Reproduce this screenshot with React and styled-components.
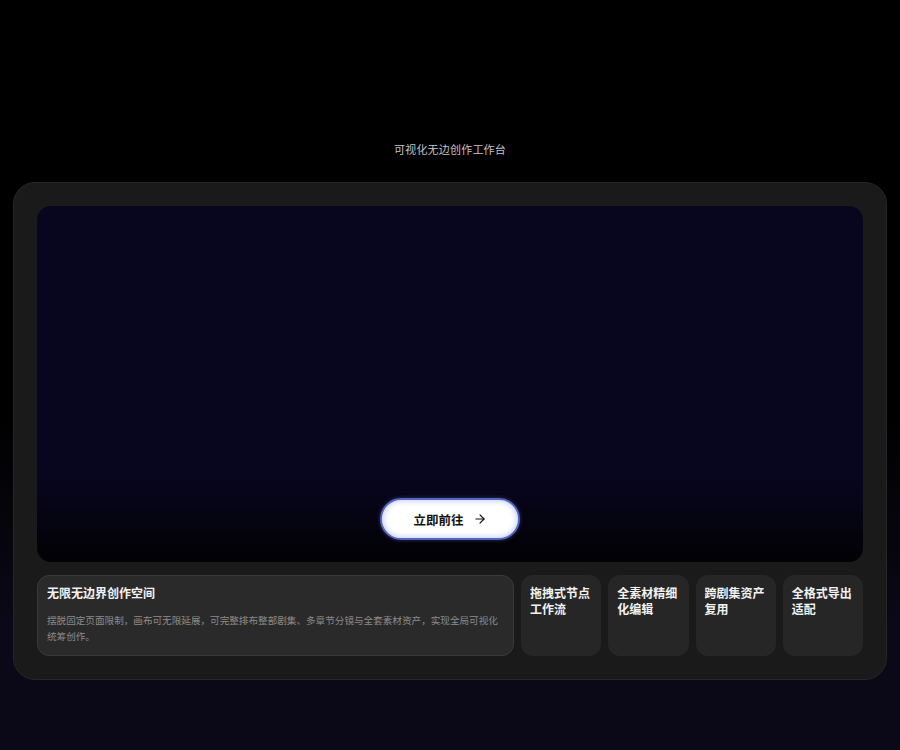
import React from 'react';
import styled, { createGlobalStyle } from 'styled-components';

const GlobalStyle = createGlobalStyle`
  html, body {
    margin: 0;
    padding: 0;
    background: #000;
  }
  body {
    font-family: "Noto Sans CJK SC", "Noto Sans", sans-serif;
  }
`;

const Page = styled.main`
  min-height: 750px;
  box-sizing: border-box;
  padding: 139px 13px 70px;
  background: linear-gradient(to bottom, #000 0%, #000 55%, #0b0918 85%, #0b0918 100%);
  display: flex;
  flex-direction: column;
  align-items: center;
`;

const Subtitle = styled.p`
  margin: 0 0 23px;
  font-size: 11px;
  line-height: 20px;
  color: #c4c4c4;
  letter-spacing: 0.2px;
`;

const Panel = styled.section`
  width: 100%;
  box-sizing: border-box;
  padding: 23px;
  background: #1a1a1a;
  border: 1px solid #262626;
  border-radius: 22px;
  display: flex;
  flex-direction: column;
  gap: 13px;
`;

const Canvas = styled.div`
  height: 356px;
  border-radius: 14px;
  background: linear-gradient(to bottom, #08061f 0%, #08061f 75%, #020104 100%);
  display: flex;
  align-items: flex-end;
  justify-content: center;
  padding-bottom: 22px;
  box-sizing: border-box;
`;

const GoButton = styled.button`
  width: 140px;
  height: 42px;
  border-radius: 21px;
  border: 2px solid #5566c2;
  background: #fff;
  box-shadow: inset 0 0 6px rgba(110, 130, 230, 0.55), 0 0 4px rgba(120, 140, 240, 0.35);
  display: flex;
  align-items: center;
  justify-content: center;
  gap: 9px;
  font-family: inherit;
  font-size: 12.5px;
  font-weight: 700;
  color: #111;
  cursor: pointer;
`;

const Features = styled.div`
  display: grid;
  grid-template-columns: 477px repeat(4, 1fr);
  gap: 7px;
  height: 81px;
`;

const Card = styled.div`
  box-sizing: border-box;
  border-radius: 12px;
  padding: ${(p) => (p.$wide ? '9px 9px' : '10px 9px')};
  background: ${(p) => (p.$wide ? '#2a2a2a' : '#262626')};
  border: ${(p) => (p.$wide ? '1px solid #3a3a3a' : 'none')};
`;

const CardTitle = styled.h3`
  margin: 0;
  font-size: 12px;
  line-height: 16px;
  font-weight: 700;
  color: #f2f2f2;
`;

const CardText = styled.p`
  margin: 11px 0 0;
  font-size: 9.6px;
  line-height: 16px;
  color: #8c8c8c;
`;

const features = ['拖拽式节点工作流', '全素材精细化编辑', '跨剧集资产复用', '全格式导出适配'];

export default function App() {
  return (
    <>
      <GlobalStyle />
      <Page>
        <Subtitle>可视化无边创作工作台</Subtitle>
        <Panel>
          <Canvas>
            <GoButton>
              立即前往
              <svg width="14" height="14" viewBox="0 0 24 24" fill="none" stroke="#111" strokeWidth="2" strokeLinecap="round" strokeLinejoin="round">
                <path d="M5 12h14" />
                <path d="M12 5l7 7-7 7" />
              </svg>
            </GoButton>
          </Canvas>
          <Features>
            <Card $wide>
              <CardTitle>无限无边界创作空间</CardTitle>
              <CardText>
                摆脱固定页面限制，画布可无限延展，可完整排布整部剧集、多章节分镜与全套素材资产，实现全局可视化统筹创作。
              </CardText>
            </Card>
            {features.map((f) => (
              <Card key={f}>
                <CardTitle>{f}</CardTitle>
              </Card>
            ))}
          </Features>
        </Panel>
      </Page>
    </>
  );
}
